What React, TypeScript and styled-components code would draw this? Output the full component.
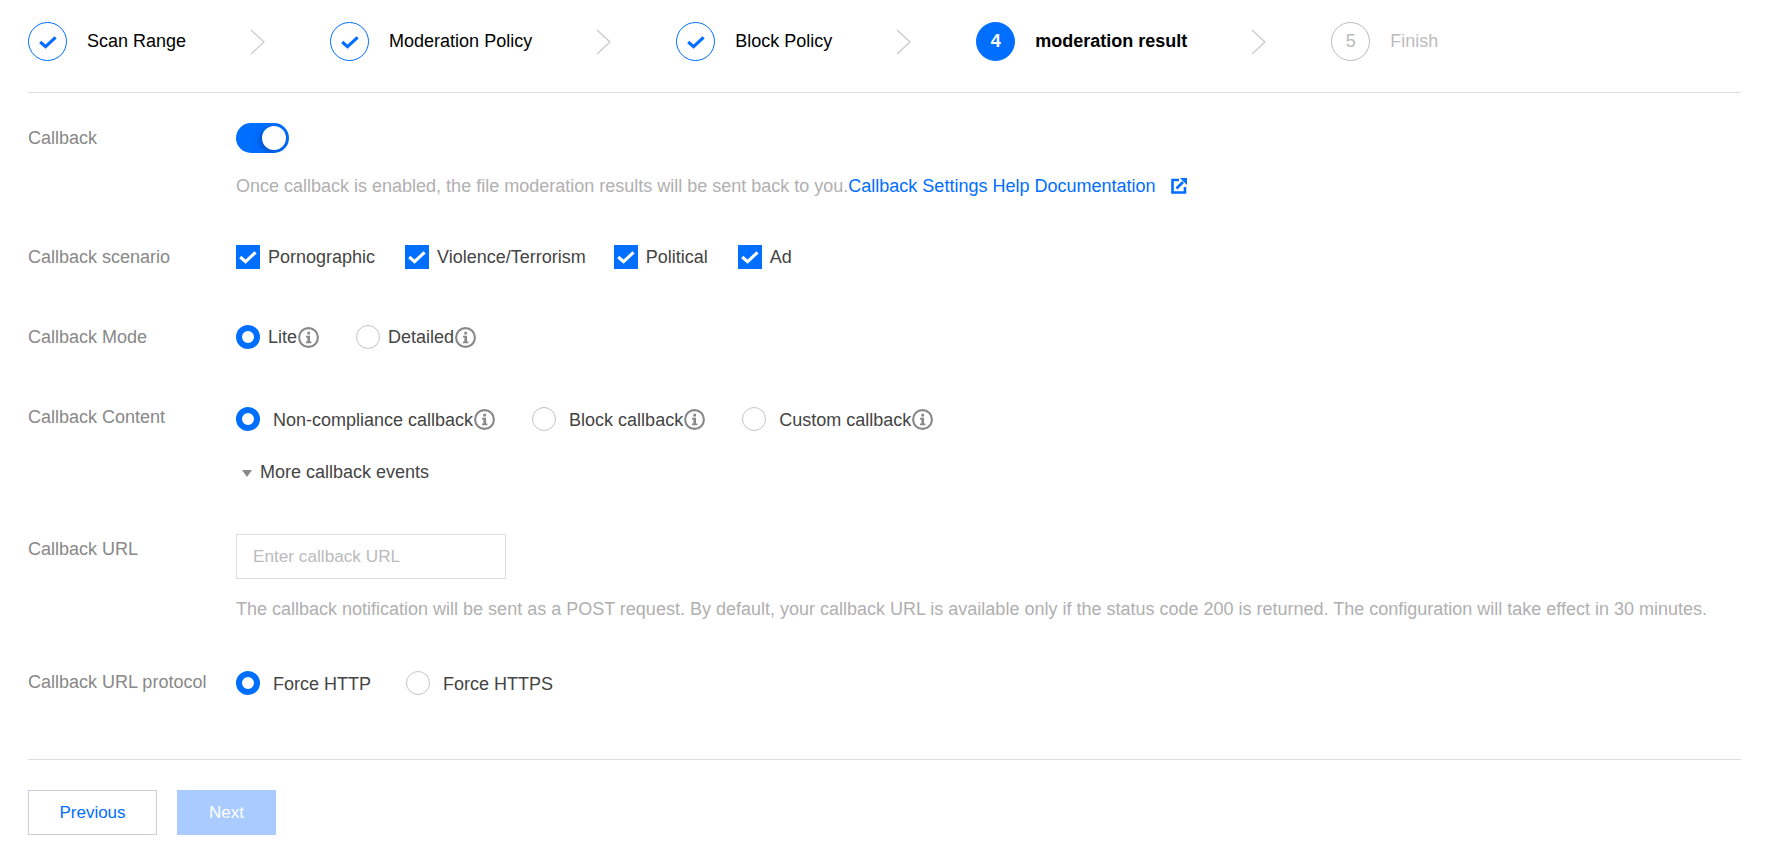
import React from "react";
import styled, { createGlobalStyle } from "styled-components";

const GlobalStyle = createGlobalStyle`
  html, body {
    margin: 0;
    padding: 0;
    background: #fff;
  }
  body {
    font-family: "Liberation Sans", Arial, sans-serif;
    font-size: 18px;
    color: #444;
  }
`;

const Page = styled.div`
  box-sizing: border-box;
  width: 1765px;
  height: 853px;
  padding: 22px 24px 0 28px;
  overflow: hidden;
`;

const Stepper = styled.div`
  display: flex;
  align-items: center;
  height: 39px;
  padding-bottom: 31px;
  border-bottom: 1px solid #ddd;
  box-sizing: content-box;
`;

const Step = styled.div`
  display: flex;
  align-items: center;
  gap: 20px;
  flex-shrink: 0;
`;

const StepCircle = styled.div<{ $state: "done" | "active" | "todo" }>`
  box-sizing: border-box;
  width: 39px;
  height: 39px;
  border-radius: 50%;
  display: flex;
  align-items: center;
  justify-content: center;
  font-size: 18px;
  font-weight: ${(p) => (p.$state === "active" ? 700 : 400)};
  color: ${(p) => (p.$state === "active" ? "#fff" : "#bbb")};
  background: ${(p) => (p.$state === "active" ? "#006eff" : "#fff")};
  border: 1px solid ${(p) => (p.$state === "todo" ? "#bbb" : "#006eff")};
`;

const StepText = styled.div<{ $state: "done" | "active" | "todo" }>`
  font-size: 18px;
  white-space: nowrap;
  font-weight: ${(p) => (p.$state === "active" ? 700 : 400)};
  color: ${(p) => (p.$state === "todo" ? "#bbb" : "#000")};
`;

const StepArrow = styled.svg`
  width: 15px;
  height: 26px;
  margin: 0 65px 0 64px;
  flex-shrink: 0;
  fill: none;
  stroke: #c8c8c8;
  stroke-width: 1.2;
`;

const Form = styled.div`
  display: flex;
  flex-direction: column;
  padding-top: 30px;
  border-bottom: 1px solid #ddd;
  height: 667px;
  box-sizing: border-box;
`;

const Row = styled.div<{ $after: number }>`
  display: flex;
  align-items: flex-start;
  margin-bottom: ${(p) => p.$after}px;
`;

const Label = styled.div<{ $top?: number }>`
  width: 208px;
  flex-shrink: 0;
  color: #888;
  font-size: 18px;
  line-height: 24px;
  padding-top: ${(p) => p.$top ?? 0}px;
  white-space: nowrap;
`;

const Field = styled.div<{ $top?: number }>`
  display: flex;
  flex-direction: column;
  align-items: flex-start;
  padding-top: ${(p) => p.$top ?? 0}px;
`;

const Switch = styled.div`
  position: relative;
  width: 53px;
  height: 30px;
  border-radius: 15px;
  background: #006eff;
  overflow: hidden;
`;

const Knob = styled.span`
  position: absolute;
  top: 3px;
  right: 3px;
  width: 24px;
  height: 24px;
  border-radius: 50%;
  background: #fff;
  box-shadow: -2px 2px 6px rgba(0, 40, 120, 0.45);
`;

const Hint = styled.div<{ $top: number }>`
  margin-top: ${(p) => p.$top}px;
  font-size: 18px;
  line-height: 24px;
  color: #b0b0b0;
  white-space: nowrap;
  display: flex;
  align-items: center;
`;

const HelpLink = styled.a`
  color: #006eff;
  text-decoration: none;
`;

const LinkIcon = styled.svg`
  width: 16px;
  height: 16px;
  margin-left: 15px;
  flex-shrink: 0;
`;

const Options = styled.div`
  display: flex;
  align-items: center;
  height: 24px;
`;

const CheckOption = styled.div<{ $after?: number }>`
  display: flex;
  align-items: center;
  gap: 8px;
  margin-right: ${(p) => p.$after ?? 0}px;
  line-height: 24px;
`;

const CheckBox = styled.span`
  width: 24px;
  height: 24px;
  background: #006eff;
  display: flex;
  align-items: center;
  justify-content: center;
`;

const RadioOption = styled.div<{ $gap: number; $after?: number }>`
  display: flex;
  align-items: center;
  gap: ${(p) => p.$gap}px;
  margin-right: ${(p) => p.$after ?? 0}px;
  line-height: 24px;
`;

const Radio = styled.span<{ $on?: boolean }>`
  box-sizing: border-box;
  width: 24px;
  height: 24px;
  border-radius: 50%;
  background: #fff;
  flex-shrink: 0;
  border: ${(p) => (p.$on ? "6.5px solid #006eff" : "1px solid #c4c4c4")};
`;

const OptionText = styled.span<{ $drop?: boolean }>`
  display: flex;
  align-items: center;
  color: #444;
  white-space: nowrap;
  padding-top: ${(p) => (p.$drop ? 2 : 0)}px;

  svg {
    margin-top: ${(p) => (p.$drop ? -2 : 0)}px;
  }
`;

const InfoIcon = styled.svg`
  width: 21px;
  height: 21px;
  margin-left: 1px;
  flex-shrink: 0;
`;

const More = styled.div`
  display: flex;
  align-items: center;
  gap: 8px;
  margin-top: 29px;
  margin-left: 6px;
  line-height: 24px;
  color: #444;
`;

const Caret = styled.span`
  width: 0;
  height: 0;
  border-left: 5.5px solid transparent;
  border-right: 5.5px solid transparent;
  border-top: 7px solid #888;
  margin-top: 3px;
`;

const UrlInput = styled.input`
  box-sizing: border-box;
  width: 270px;
  height: 45px;
  padding: 0 16px;
  border: 1px solid #ddd;
  border-radius: 0;
  outline: none;
  font-family: "Liberation Sans", Arial, sans-serif;
  font-size: 17.2px;
  color: #444;
  &::placeholder {
    color: #bbb;
    opacity: 1;
  }
`;

const Footer = styled.div`
  display: flex;
  gap: 20px;
  margin-top: 30px;
`;

const BaseButton = styled.button`
  box-sizing: border-box;
  height: 45px;
  padding: 0;
  border-radius: 0;
  font-family: "Liberation Sans", Arial, sans-serif;
  font-size: 17px;
`;

const PrevButton = styled(BaseButton)`
  width: 129px;
  background: #fff;
  color: #006eff;
  border: 1px solid #ccd;
`;

const NextButton = styled(BaseButton)`
  width: 99px;
  background: #a9cbff;
  color: #fff;
  border: none;
`;

const Check = ({ color }: { color: string }) => (
  <svg width={20} height={20} viewBox="0 0 18 18" fill="none">
    <path d="M2 9 L6.8 13.2 L15.8 4.8" stroke={color} strokeWidth="2.8" />
  </svg>
);

const Info = () => (
  <InfoIcon viewBox="0 0 21 21" fill="none">
    <circle cx="10.5" cy="10.5" r="9.4" stroke="#888" strokeWidth="2.1" />
    <rect x="9.3" y="4.8" width="2.7" height="2.7" fill="#888" />
    <path d="M8 8.8 H12 V14.6 H13.4 V16.2 H8 V14.6 H9.4 V10.4 H8 Z" fill="#888" />
  </InfoIcon>
);

const Arrow = () => (
  <StepArrow viewBox="0 0 15 26">
    <path d="M1 1 L14 13 L1 25" />
  </StepArrow>
);

export default function App() {
  return (
    <Page>
      <GlobalStyle />
      <Stepper>
        <Step>
          <StepCircle $state="done">
            <Check color="#006eff" />
          </StepCircle>
          <StepText $state="done">Scan Range</StepText>
        </Step>
        <Arrow />
        <Step>
          <StepCircle $state="done">
            <Check color="#006eff" />
          </StepCircle>
          <StepText $state="done">Moderation Policy</StepText>
        </Step>
        <Arrow />
        <Step>
          <StepCircle $state="done">
            <Check color="#006eff" />
          </StepCircle>
          <StepText $state="done">Block Policy</StepText>
        </Step>
        <Arrow />
        <Step>
          <StepCircle $state="active">4</StepCircle>
          <StepText $state="active">moderation result</StepText>
        </Step>
        <Arrow />
        <Step>
          <StepCircle $state="todo">5</StepCircle>
          <StepText $state="todo">Finish</StepText>
        </Step>
      </Stepper>

      <Form>
        <Row $after={47}>
          <Label $top={3}>Callback</Label>
          <Field>
            <Switch>
              <Knob />
            </Switch>
            <Hint $top={21}>
              Once callback is enabled, the file moderation results will be sent back to you.
              <HelpLink>Callback Settings Help Documentation</HelpLink>
              <LinkIcon viewBox="0 0 16 16" fill="none">
                <path d="M8 2 H1.5 V14.5 H14 V9" stroke="#006eff" strokeWidth="2.6" />
                <path d="M5.5 10.5 L12 4" stroke="#006eff" strokeWidth="2.6" />
                <path d="M9 0 H16 V7 Z" fill="#006eff" />
              </LinkIcon>
            </Hint>
          </Field>
        </Row>

        <Row $after={56}>
          <Label>Callback scenario</Label>
          <Options>
            <CheckOption $after={30}>
              <CheckBox>
                <Check color="#fff" />
              </CheckBox>
              Pornographic
            </CheckOption>
            <CheckOption $after={28}>
              <CheckBox>
                <Check color="#fff" />
              </CheckBox>
              Violence/Terrorism
            </CheckOption>
            <CheckOption $after={30}>
              <CheckBox>
                <Check color="#fff" />
              </CheckBox>
              Political
            </CheckOption>
            <CheckOption>
              <CheckBox>
                <Check color="#fff" />
              </CheckBox>
              Ad
            </CheckOption>
          </Options>
        </Row>

        <Row $after={56}>
          <Label>Callback Mode</Label>
          <Options>
            <RadioOption $gap={8} $after={37}>
              <Radio $on />
              <OptionText>
                Lite
                <Info />
              </OptionText>
            </RadioOption>
            <RadioOption $gap={8}>
              <Radio />
              <OptionText>
                Detailed
                <Info />
              </OptionText>
            </RadioOption>
          </Options>
        </Row>

        <Row $after={50}>
          <Label>Callback Content</Label>
          <Field $top={2}>
            <Options>
              <RadioOption $gap={13} $after={37}>
                <Radio $on />
                <OptionText $drop>
                  Non-compliance callback
                  <Info />
                </OptionText>
              </RadioOption>
              <RadioOption $gap={13} $after={37}>
                <Radio />
                <OptionText $drop>
                  Block callback
                  <Info />
                </OptionText>
              </RadioOption>
              <RadioOption $gap={13}>
                <Radio />
                <OptionText $drop>
                  Custom callback
                  <Info />
                </OptionText>
              </RadioOption>
            </Options>
            <More>
              <Caret />
              More callback events
            </More>
          </Field>
        </Row>

        <Row $after={49}>
          <Label $top={3}>Callback URL</Label>
          <Field>
            <UrlInput placeholder="Enter callback URL" />
            <Hint $top={18}>
              The callback notification will be sent as a POST request. By default, your callback URL is available only if the status code 200 is returned. The configuration will take effect in 30 minutes.
            </Hint>
          </Field>
        </Row>

        <Row $after={0}>
          <Label>Callback URL protocol</Label>
          <Field $top={1}>
            <Options>
              <RadioOption $gap={13} $after={35}>
                <Radio $on />
                <OptionText $drop>Force HTTP</OptionText>
              </RadioOption>
              <RadioOption $gap={13}>
                <Radio />
                <OptionText $drop>Force HTTPS</OptionText>
              </RadioOption>
            </Options>
          </Field>
        </Row>
      </Form>

      <Footer>
        <PrevButton>Previous</PrevButton>
        <NextButton disabled>Next</NextButton>
      </Footer>
    </Page>
  );
}
